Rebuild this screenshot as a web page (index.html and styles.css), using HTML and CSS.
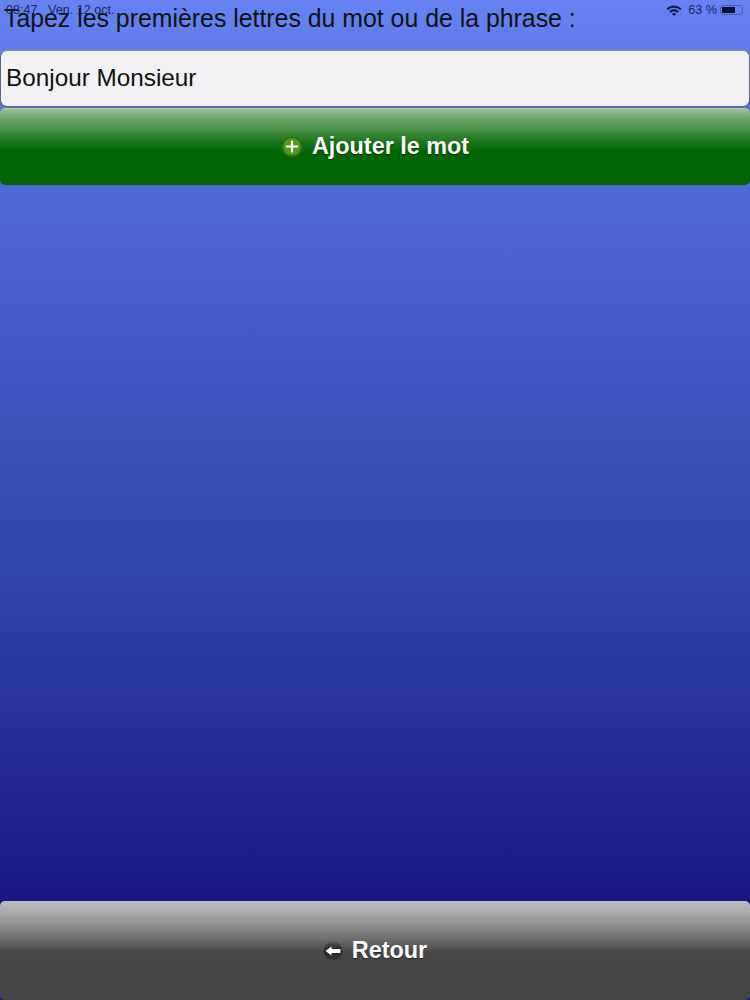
FILE: index.html
```html
<!DOCTYPE html>
<html lang="fr">

<head>
    <meta charset="UTF-8">
    <meta name="viewport" content="width=device-width, initial-scale=1.0">
    <title>Ajouter le mot</title>
    <link rel="stylesheet" href="styles.css">
</head>

<body>
    <div class="status">
        <div>08:47 &nbsp;&nbsp;Ven. 12 oct.</div>
        <div class="status__right">
            <svg class="status__wifi" width="16" height="11" viewBox="0 0 16 11">
                <path d="M0.5 3.6C4.6 -0.4 11.4 -0.4 15.5 3.6L14 5.2C10.7 2 5.3 2 2 5.2Z" />
                <path d="M3.2 6.2C5.9 3.7 10.1 3.7 12.8 6.2L11.3 7.8C9.4 6.1 6.6 6.1 4.7 7.8Z" />
                <path d="M5.8 8.8C7.1 7.7 8.9 7.7 10.2 8.8L8 11Z" />
            </svg>
            <span class="status__pct">63 %</span>
            <span class="battery"><span class="battery__level"></span></span>
        </div>
    </div>

    <form class="page">
        <label class="prompt" for="mot">Tapez les premières lettres du mot ou de la phrase :</label>
        <input class="field" id="mot" type="text" value="Bonjour Monsieur">
        <button class="btn btn--green" type="button">
            <svg class="btn__icon" width="22" height="22" viewBox="0 0 22 22">
                <circle cx="11" cy="11" r="10.5" fill="#2c6a10" />
                <circle cx="11" cy="10.5" r="8.8" fill="#4f9a18" />
                <path d="M11 4.5V16.5M5 10.5H17" stroke="#fff" stroke-width="2.2" />
            </svg>
            Ajouter le mot
        </button>
        <div class="spacer"></div>
        <button class="btn btn--grey" type="button">
            <svg class="btn__icon" width="20" height="20" viewBox="0 0 20 20">
                <defs>
                    <linearGradient id="retour-fill" x1="0" y1="0" x2="0" y2="1">
                        <stop offset="0" stop-color="#555" />
                        <stop offset="0.5" stop-color="#222" />
                        <stop offset="1" stop-color="#3a3a3a" />
                    </linearGradient>
                </defs>
                <circle cx="10" cy="10" r="9.5" fill="url(#retour-fill)" />
                <path d="M2.5 10L8.5 5.5V8H17.5V12H8.5V14.5Z" fill="#fff" />
            </svg>
            Retour
        </button>
    </form>
</body>

</html>
```

FILE: styles.css
```css
* {
    box-sizing: border-box;
}

body {
    margin: 0;
    padding: 0;
    height: 1000px;
    overflow: hidden;
    background: linear-gradient(#6683f1 0, #4d67d2 200px, #3343ab 580px, #18187f 900px);
    color: #111;
    font-family: 'Liberation Sans', Arial, sans-serif;
}

.status {
    position: absolute;
    top: 3px;
    left: 6px;
    right: 7px;
    display: flex;
    justify-content: space-between;
    font-size: 12.6px;
    line-height: 14px;
    color: #1a2468;
}

.status__right {
    display: flex;
    align-items: center;
}

.status__wifi {
    fill: #101a50;
    margin-right: 6px;
}

.status__pct {
    margin-right: 3px;
}

.battery {
    display: block;
    width: 23px;
    height: 10px;
    padding: 1px;
    border: 1px solid #4a5aa8;
    border-radius: 3px;
}

.battery__level {
    display: block;
    width: 13px;
    height: 6px;
    background: #0a0f38;
}

.page {
    height: 1000px;
    display: flex;
    flex-direction: column;
}

.prompt {
    height: 50px;
    padding: 4px 0 0 4px;
    font-size: 24.85px;
    line-height: 29px;
    white-space: nowrap;
}

.field {
    width: 100%;
    height: 57px;
    margin: 0;
    padding: 0 5px 2px;
    background: #f1f1f3;
    border: 1px solid #5b6680;
    border-top-color: #8b8f9c;
    border-radius: 7px;
    color: #111;
    font-family: inherit;
    font-size: 24.3px;
    outline: none;
}

.btn {
    width: 100%;
    margin: 0;
    display: flex;
    justify-content: center;
    align-items: center;
    gap: 9px;
    border: 0;
    border-radius: 5px;
    color: #fff;
    font-family: inherit;
    font-size: 23.4px;
    font-weight: bold;
    text-shadow: 0 1px 1px rgba(0, 0, 0, 0.5);
}

.btn--green {
    height: 77px;
    margin-top: 1px;
    background: linear-gradient(#a4c8a0 0, #7fb07c 6px, #1a761a 34px, #006400 44px, #006400 100%);
}

.btn--grey {
    height: 99px;
    background: linear-gradient(#bdbdc0 0, #a9a9ac 12px, #6d6d6f 38px, #464648 52px, #444446 100%);
}

.spacer {
    flex: 1;
}
```
